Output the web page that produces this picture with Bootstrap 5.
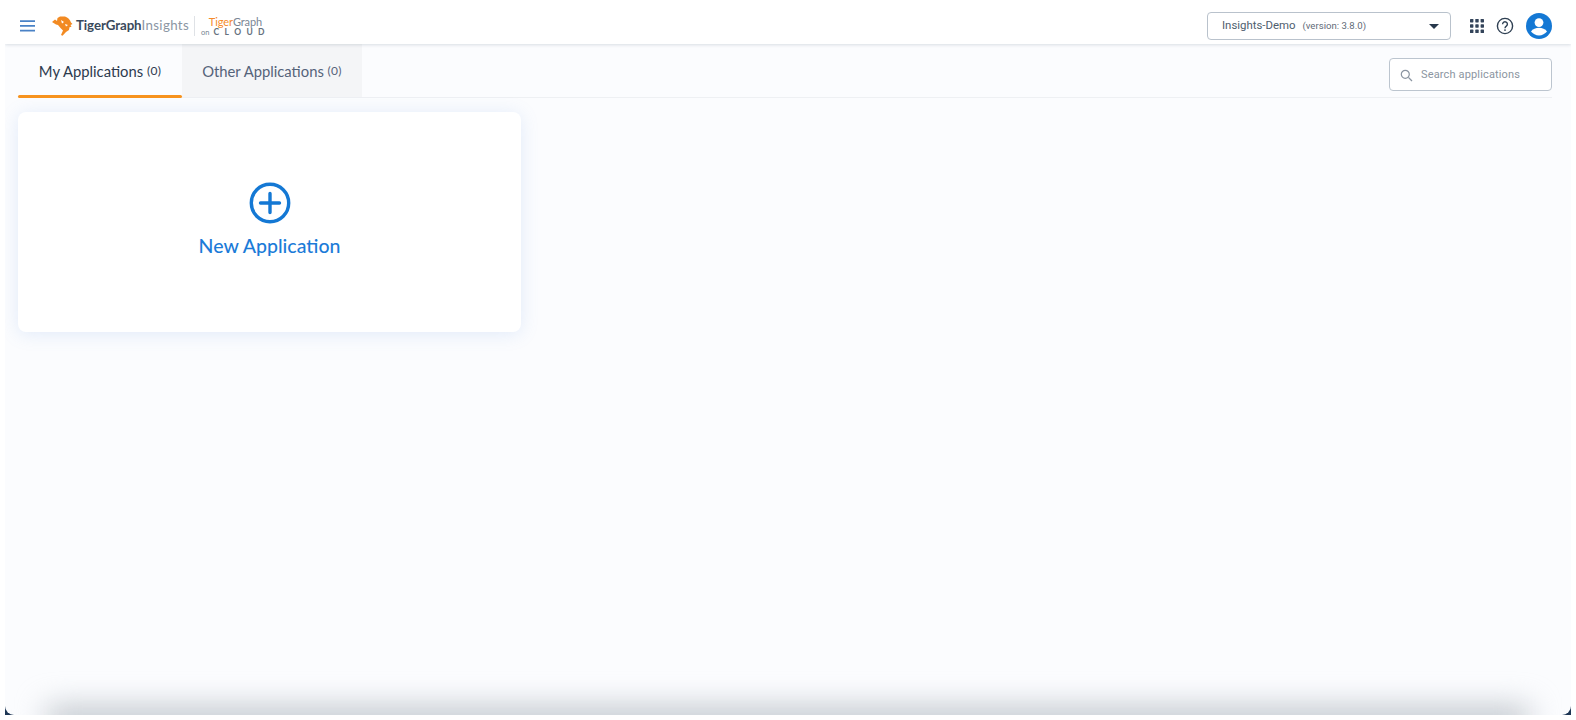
<!DOCTYPE html>
<html lang="en">
<head>
  <meta charset="UTF-8">
  <title>TigerGraph Insights</title>
  <link href="https://cdn.jsdelivr.net/npm/bootstrap@5.3.0/dist/css/bootstrap.min.css" rel="stylesheet">
  <style>
    html, body { height: 100%; overflow: hidden; background: #fff; }
    body { font-family: Roboto, "Liberation Sans", sans-serif; }
    .app-frame {
      position: relative; overflow: hidden;
      margin-left: 5px; width: 1566px; height: 715px;
      background: #1d3654;
    }
    .app-inner {
      position: relative; overflow: hidden;
      height: 100%; background: #fbfcfe;
      border-radius: 0 0 9px 9px;
    }
    .app-inner::after {
      content: ""; position: absolute; left: 42px; right: 42px; bottom: -18px; height: 26px;
      background: #bcc2c9; filter: blur(15px);
    }
    .top-bar { height: 44px; padding: 8px 19px 0 15px; background: #fff; box-shadow: 0 1px 3px rgba(40,60,90,.16); position: relative; }
    .brand-name { font-family: Lato, sans-serif; font-size: 13.3px; font-weight: 700; color: #3a4a5c; margin-left: 3px; letter-spacing: -.1px; }
    .brand-name span { font-weight: 400; color: #8b96a3; letter-spacing: .35px; }
    .brand-sep { width: 1px; height: 20px; background: #dfe2e6; margin: 0 6px 0 5px; }
    .cloud-logo { font-family: Lato, sans-serif; color: #7a8694; line-height: 1; width: 62px; }
    .cloud-top { font-size: 11px; text-align: right; letter-spacing: -.1px; padding-right: 1px; }
    .cloud-top span { color: #f58a2a; }
    .cloud-bot { font-size: 7.5px; margin-top: 1px; white-space: nowrap; }
    .cloud-bot b { font-size: 8.5px; letter-spacing: 5.4px; margin-left: 4px; color: #66717e; }
    .graph-select {
      width: 244px; height: 28px; margin-right: 19px; padding: 0 11px 0 14px;
      background: #fff; border: 1px solid #b9c2cc; border-radius: 4px;
      font-size: 11.4px; color: #4e5d6e;
    }
    .graph-select small { font-size: 9.6px; margin-left: 7px; color: #5f6b78; }
    .caret-down { width: 0; height: 0; border-left: 5px solid transparent; border-right: 5px solid transparent; border-top: 5px solid #27384c; margin-left: auto; }
    .help-icon { margin: 0 12px; }
    .tab-row { margin: 0 19px 0 13px; height: 54px; border-bottom: 1px solid #eef0f3; }
    .app-tab { height: 53px; padding-top: 1px; font-family: Lato, sans-serif; font-size: 14.8px; color: #55637a; }
    .app-tab small { font-size: 12px; letter-spacing: .3px; }
    .tab-mine { width: 164px; color: #2c3a4e; position: relative; }
    .tab-mine::after { content: ""; position: absolute; left: 0; right: 0; bottom: -1px; height: 3px; background: #f7931e; border-radius: 2px; }
    .tab-other { width: 180px; background: #f4f5f7; }
    .search-box {
      width: 163px; height: 33px; margin-top: 14px; padding: 1px 10px 0;
      background: #fff; border: 1px solid #bcc5cf; border-radius: 4px;
      font-size: 11px; color: #8b95a1; letter-spacing: .15px;
    }
    .new-app-card {
      width: 503px; height: 220px; margin: 14px 0 0 13px; padding-bottom: 4px;
      background: #fff; border-radius: 8px;
      box-shadow: 0 2px 18px rgba(110,155,225,.18);
    }
    .new-app-label { font-family: Lato, sans-serif; font-size: 19.5px; font-weight: 500; color: #1b7bd8; margin-top: 9px; line-height: 26px; }
  </style>
</head>
<body>
  <div class="app-frame">
    <div class="app-inner">
      <!-- Top bar -->
      <header class="top-bar d-flex align-items-center">
        <svg width="16" height="12" viewBox="0 0 16 12" class="me-3 flex-shrink-0"><path d="M0 1.2h15M0 5.900h15M0 10.600h15" stroke="#4a82c6" stroke-width="1.700"/></svg>
        <svg width="21" height="21" viewBox="0 0 21 21" class="flex-shrink-0">
          <path d="M0 6 3 3.500 5 5 5.500 2 8 .5 13 .5c3 1 5 3 6 6l1.500 1.500-2 1 1 1.800-2 .4-.5 2.700-3 2-3.500 3.800-1.500-.8 2-4.400-2.500-2.500-2.500-3-2-.5z" fill="#f28a22"/>
          <path d="M9 4l3 2-2 1.500zM13 8l3 1-2 1.500z" fill="#fff"/>
        </svg>
        <div class="brand-name">TigerGraph<span>Insights</span></div>
        <div class="brand-sep"></div>
        <div class="cloud-logo">
          <div class="cloud-top"><span>Tiger</span>Graph</div>
          <div class="cloud-bot">on<b>CLOUD</b></div>
        </div>
        <div class="graph-select d-flex align-items-center ms-auto">
          Insights-Demo <small>(version: 3.8.0)</small>
          <span class="caret-down"></span>
        </div>
        <svg width="14" height="14" viewBox="0 0 14 14" class="flex-shrink-0"><g fill="#33445a"><rect x="0" y="0" width="3.400" height="3.400" rx=".6"/><rect x="5.300" y="0" width="3.400" height="3.400" rx=".6"/><rect x="10.600" y="0" width="3.400" height="3.400" rx=".6"/><rect x="0" y="5.300" width="3.400" height="3.400" rx=".6"/><rect x="5.300" y="5.300" width="3.400" height="3.400" rx=".6"/><rect x="10.600" y="5.300" width="3.400" height="3.400" rx=".6"/><rect x="0" y="10.600" width="3.400" height="3.400" rx=".6"/><rect x="5.300" y="10.600" width="3.400" height="3.400" rx=".6"/><rect x="10.600" y="10.600" width="3.400" height="3.400" rx=".6"/></g></svg>
        <svg width="18" height="18" viewBox="0 0 18 18" class="flex-shrink-0 help-icon"><circle cx="9" cy="9" r="7.600" fill="none" stroke="#2f4053" stroke-width="1.400"/><path d="M6.600 7.200a2.400 2.400 0 1 1 3.700 2c-.9.6-1.300 1-1.300 2" fill="none" stroke="#2f4053" stroke-width="1.400"/><circle cx="9" cy="13.100" r=".9" fill="#2f4053"/></svg>
        <svg width="26" height="26" viewBox="0 0 26 26" class="flex-shrink-0"><circle cx="13" cy="13" r="13" fill="#1478d4"/><circle cx="13" cy="9.600" r="4.400" fill="#fff"/><path d="M5 18.600c1.600-2.600 5-3.800 8-3.800s6.400 1.200 8 3.800c-1.800 2.400-4.800 3.900-8 3.900s-6.200-1.500-8-3.900z" fill="#fff"/></svg>
      </header>

      <!-- Tabs -->
      <div class="tab-row d-flex align-items-start">
        <div class="app-tab tab-mine d-flex align-items-center justify-content-center">My Applications&nbsp;<small>(0)</small></div>
        <div class="app-tab tab-other d-flex align-items-center justify-content-center">Other Applications&nbsp;<small>(0)</small></div>
        <div class="search-box d-flex align-items-center gap-2 ms-auto">
          <svg width="13" height="13" viewBox="0 0 13 13" class="flex-shrink-0"><circle cx="5.300" cy="5.300" r="4" fill="none" stroke="#8b95a1" stroke-width="1.200"/><path d="M8.400 8.400 12 12" stroke="#8b95a1" stroke-width="1.300"/></svg>
          <span>Search applications</span>
        </div>
      </div>

      <!-- New application card -->
      <div class="new-app-card d-flex flex-column align-items-center justify-content-center">
        <svg width="42" height="42" viewBox="0 0 42 42"><circle cx="21" cy="21" r="18.700" fill="none" stroke="#1478d4" stroke-width="3.400"/><path d="M21 11.500v19M11.500 21h19" stroke="#1478d4" stroke-width="3.400" stroke-linecap="round"/></svg>
        <div class="new-app-label">New Application</div>
      </div>
    </div>
  </div>
  <script src="https://cdn.jsdelivr.net/npm/bootstrap@5.3.0/dist/js/bootstrap.bundle.min.js"></script>
</body>
</html>
